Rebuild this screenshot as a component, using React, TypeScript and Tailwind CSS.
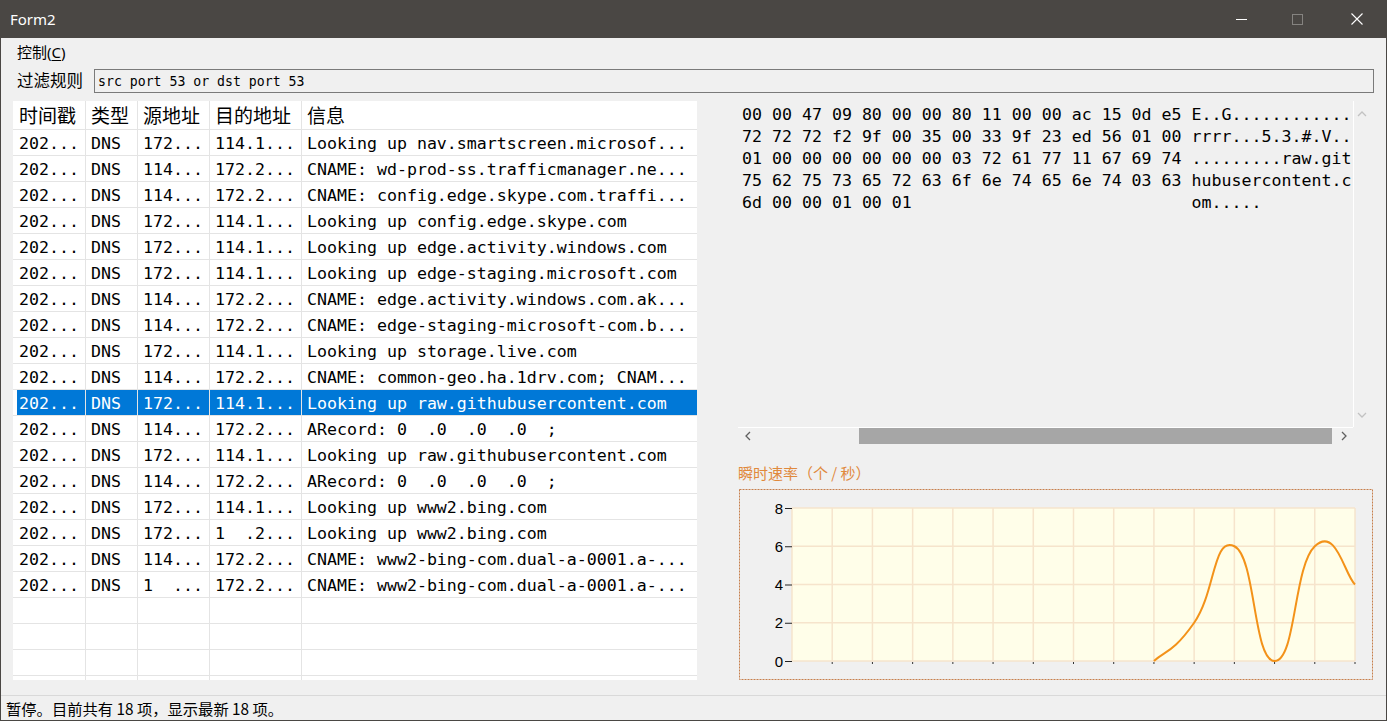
import React from "react";

type Row = [string, string, string, string, string];

const rows: Row[] = [
  ["202...", "DNS", "172...", "114.1...", "Looking up nav.smartscreen.microsof..."],
  ["202...", "DNS", "114...", "172.2...", "CNAME: wd-prod-ss.trafficmanager.ne..."],
  ["202...", "DNS", "114...", "172.2...", "CNAME: config.edge.skype.com.traffi..."],
  ["202...", "DNS", "172...", "114.1...", "Looking up config.edge.skype.com"],
  ["202...", "DNS", "172...", "114.1...", "Looking up edge.activity.windows.com"],
  ["202...", "DNS", "172...", "114.1...", "Looking up edge-staging.microsoft.com"],
  ["202...", "DNS", "114...", "172.2...", "CNAME: edge.activity.windows.com.ak..."],
  ["202...", "DNS", "114...", "172.2...", "CNAME: edge-staging-microsoft-com.b..."],
  ["202...", "DNS", "172...", "114.1...", "Looking up storage.live.com"],
  ["202...", "DNS", "114...", "172.2...", "CNAME: common-geo.ha.1drv.com; CNAM..."],
  ["202...", "DNS", "172...", "114.1...", "Looking up raw.githubusercontent.com"],
  ["202...", "DNS", "114...", "172.2...", "ARecord: 0  .0  .0  .0  ;"],
  ["202...", "DNS", "172...", "114.1...", "Looking up raw.githubusercontent.com"],
  ["202...", "DNS", "114...", "172.2...", "ARecord: 0  .0  .0  .0  ;"],
  ["202...", "DNS", "172...", "114.1...", "Looking up www2.bing.com"],
  ["202...", "DNS", "172...", "1  .2...", "Looking up www2.bing.com"],
  ["202...", "DNS", "114...", "172.2...", "CNAME: www2-bing-com.dual-a-0001.a-..."],
  ["202...", "DNS", "1  ...", "172.2...", "CNAME: www2-bing-com.dual-a-0001.a-..."],
];

const hexLines = [
  "00 00 47 09 80 00 00 80 11 00 00 ac 15 0d e5 E..G............",
  "72 72 72 f2 9f 00 35 00 33 9f 23 ed 56 01 00 rrrr...5.3.#.V..",
  "01 00 00 00 00 00 00 03 72 61 77 11 67 69 74 .........raw.git",
  "75 62 75 73 65 72 63 6f 6e 74 65 6e 74 03 63 hubusercontent.c",
  "6d 00 00 01 00 01                            om.....",
];

const widths = ["w-[73px]", "w-[52px]", "w-[72px]", "w-[92px]", "w-[395px]"];

function TableRow({ cells, selected, header }: { cells: string[]; selected?: boolean; header?: boolean }) {
  const h = header ? "h-[29px]" : "h-[26px]";
  const cellBg = selected ? "bg-[#0078d7] text-white" : "text-black";
  return (
    <div className={`flex ${h} shrink-0 border-b border-[#e4e4e4]`}>
      {cells.map((c, i) => (
        <div
          key={i}
          className={`${widths[i]} h-full shrink-0 flex ${i < 4 ? "border-r border-[#e4e4e4]" : ""} ${i === 0 ? "pl-[4px]" : ""}`}
        >
          <div
            className={`flex-1 h-full flex items-center overflow-hidden whitespace-pre ${cellBg} ${i === 0 ? "pl-[2px]" : "pl-[5px]"} ${
              header ? "text-[19px] [font-family:'Noto_Sans_CJK_SC',sans-serif]" : "pt-[4px]"
            }`}
          >
            {c}
          </div>
        </div>
      ))}
    </div>
  );
}

function Chart() {
  const x0 = 54,
    x1 = 617,
    y0 = 19,
    y1 = 172;
  const dx = (x1 - x0) / 14;
  const X = (k: number) => x0 + dx * k;
  const Y = (v: number) => y1 - (v * (y1 - y0)) / 8;
  const pts = [0, 2, 6, 0, 6, 4].map((v, i) => [X(9 + i), Y(v)]);
  const t = 0.8 / 3;
  const tan = (i: number) => {
    const a = pts[Math.max(0, i - 1)];
    const b = pts[Math.min(pts.length - 1, i + 1)];
    return [(b[0] - a[0]) * t, (b[1] - a[1]) * t];
  };
  let d = `M${pts[0][0]},${pts[0][1]}`;
  for (let i = 0; i < pts.length - 1; i++) {
    const ta = tan(i);
    const tb = tan(i + 1);
    d += ` C${pts[i][0] + ta[0]},${pts[i][1] + ta[1]} ${pts[i + 1][0] - tb[0]},${pts[i + 1][1] - tb[1]} ${pts[i + 1][0]},${pts[i + 1][1]}`;
  }
  const ks = Array.from({ length: 15 }, (_, k) => k);
  const vs = [0, 2, 4, 6, 8];
  return (
    <svg width={636} height={192} className="block">
      <rect x={1.5} y={0.5} width={633} height={190} fill="none" stroke="#c67f4c" strokeWidth={1} strokeDasharray="2 1" />
      <rect x={x0} y={y0} width={x1 - x0} height={y1 - y0} fill="#fffee9" />
      {ks.map((k) => (
        <line key={"v" + k} x1={X(k)} x2={X(k)} y1={y0} y2={y1} stroke="#f6e4cc" strokeWidth={1.5} />
      ))}
      {vs.map((v) => (
        <line key={"h" + v} x1={x0} x2={x1} y1={Y(v)} y2={Y(v)} stroke="#f6e4cc" strokeWidth={1.5} />
      ))}
      {vs.map((v) => (
        <g key={"l" + v}>
          <text
            x={45}
            y={Y(v) + 5.5}
            textAnchor="end"
            fontSize={15}
            fontFamily="'Liberation Sans', Arial, sans-serif"
            fill="#000"
          >
            {v}
          </text>
          <line x1={47} x2={54} y1={Y(v) + 0.5} y2={Y(v) + 0.5} stroke="#222" strokeWidth={1} />
        </g>
      ))}
      {ks.slice(1).map((k) => (
        <line key={"t" + k} x1={X(k)} x2={X(k)} y1={y1 + 1} y2={y1 + 3} stroke="#333" strokeWidth={1} />
      ))}
      <path d={d} fill="none" stroke="#f39219" strokeWidth={2} />
    </svg>
  );
}

function Chevron({ dir, color }: { dir: "up" | "down" | "left" | "right"; color: string }) {
  const paths: Record<string, string> = {
    up: "M1,6 L5,2 L9,6",
    down: "M1,2 L5,6 L9,2",
    left: "M6,1 L2,5 L6,9",
    right: "M2,1 L6,5 L2,9",
  };
  const vert = dir === "up" || dir === "down";
  return (
    <svg width={vert ? 10 : 8} height={vert ? 8 : 10} className="block">
      <path d={paths[dir]} fill="none" stroke={color} strokeWidth={1.3} />
    </svg>
  );
}

export default function App() {
  const mono = "[font-family:'DejaVu_Sans_Mono','Noto_Sans_CJK_SC',monospace]";
  const ui = "[font-family:'Noto_Sans','Noto_Sans_CJK_SC',sans-serif]";
  const emptyRows = 4;
  return (
    <div className="w-[1387px] h-[721px] flex flex-col bg-[#4a4744] px-px pb-px overflow-hidden">
      {/* Title bar */}
      <div className={`h-[38px] shrink-0 flex items-center text-white ${ui}`}>
        <span className="ml-[9px] text-[15px]">Form2</span>
        <div className="ml-auto flex h-full">
          <div className="w-[58px] h-full flex items-center justify-center">
            <svg width={11} height={11}>
              <line x1={0} x2={11} y1={5.5} y2={5.5} stroke="#fff" strokeWidth={1} />
            </svg>
          </div>
          <div className="w-[58px] h-full flex items-center justify-center pr-[4px]">
            <svg width={11} height={11}>
              <rect x={0.5} y={0.5} width={10} height={10} fill="none" stroke="#858380" strokeWidth={1} />
            </svg>
          </div>
          <div className="w-[58px] h-full flex items-center justify-center">
            <svg width={12} height={12}>
              <path d="M0.5,0.5 L11.5,11.5 M11.5,0.5 L0.5,11.5" stroke="#fff" strokeWidth={1.1} />
            </svg>
          </div>
        </div>
      </div>

      {/* Body */}
      <div className={`flex-1 bg-[#f0f0f0] flex flex-col ${ui}`}>
        {/* Menu */}
        <div className="h-[28px] shrink-0 flex items-center pl-[16px] text-[15px] text-black">
          <span>
            控制(<span className="underline underline-offset-2">C</span>)
          </span>
        </div>

        {/* Filter */}
        <div className="mt-[3px] h-[24px] shrink-0 flex items-center">
          <div className="w-[93px] pl-[16px] text-[16.5px] text-black leading-none">过滤规则</div>
          <div
            className={`w-[1280px] h-[24px] border border-[#7a7a7a] bg-[#f0f0f0] flex items-center pl-[3px] pt-[1px] text-[13.2px] text-black ${mono}`}
          >
            src port 53 or dst port 53
          </div>
        </div>

        {/* Content */}
        <div className="mt-[8px] h-[580px] shrink-0 flex">
          {/* Table */}
          <div className={`ml-[12px] w-[684px] h-[579px] bg-white overflow-hidden flex flex-col text-[16.6px] ${mono}`}>
            <TableRow header cells={["时间戳", "类型", "源地址", "目的地址", "信息"]} />
            {rows.map((r, i) => (
              <TableRow key={i} cells={r} selected={i === 10} />
            ))}
            {Array.from({ length: emptyRows }).map((_, i) => (
              <TableRow key={"e" + i} cells={["", "", "", "", ""]} />
            ))}
          </div>

          {/* Right panel */}
          <div className="ml-[41px] w-[636px] flex flex-col">
            <div className="w-[632px] h-[343px] flex flex-col">
              <div className="h-[326px] flex">
                <div className={`w-[615px] h-full overflow-hidden pl-[4px] pt-[3px] text-[16.6px] leading-[22px] text-black ${mono}`}>
                  {hexLines.map((l, i) => (
                    <div key={i} className="whitespace-pre">
                      {l}
                    </div>
                  ))}
                </div>
                <div className="w-[17px] h-full border-l border-white flex flex-col items-center justify-between pt-[9px] pb-[8px]">
                  <Chevron dir="up" color="#c2c2c2" />
                  <Chevron dir="down" color="#c2c2c2" />
                </div>
              </div>
              <div className="h-[17px] flex">
                <div className="w-[615px] h-full border-t border-white flex items-center">
                  <div className="w-[17px] h-full flex items-center justify-center pl-[2px]">
                    <Chevron dir="left" color="#606060" />
                  </div>
                  <div className="flex-1 h-full flex items-center pl-[104px] pr-[4px]">
                    <div className="w-full h-[16px] bg-[#a6a6a6]" />
                  </div>
                  <div className="w-[17px] h-full flex items-center justify-center pr-[2px]">
                    <Chevron dir="right" color="#606060" />
                  </div>
                </div>
                <div className="w-[17px] h-full" />
              </div>
            </div>
            <div className="mt-[20px] h-[18px] flex items-center text-[15px] text-[#e0893c] leading-none [font-family:'Noto_Sans_CJK_SC',sans-serif]">
              瞬时速率（个 / 秒）
            </div>
            <div className="mt-[8px]">
              <Chart />
            </div>
          </div>
        </div>

        {/* Status */}
        <div className="mt-[14px] border-t border-[#d9d9d9] h-[25px] flex items-center pl-[5px] text-[15.3px] text-black [font-family:'Noto_Sans_CJK_SC',sans-serif]">
          暂停。目前共有 18 项，显示最新 18 项。
        </div>
      </div>
    </div>
  );
}
